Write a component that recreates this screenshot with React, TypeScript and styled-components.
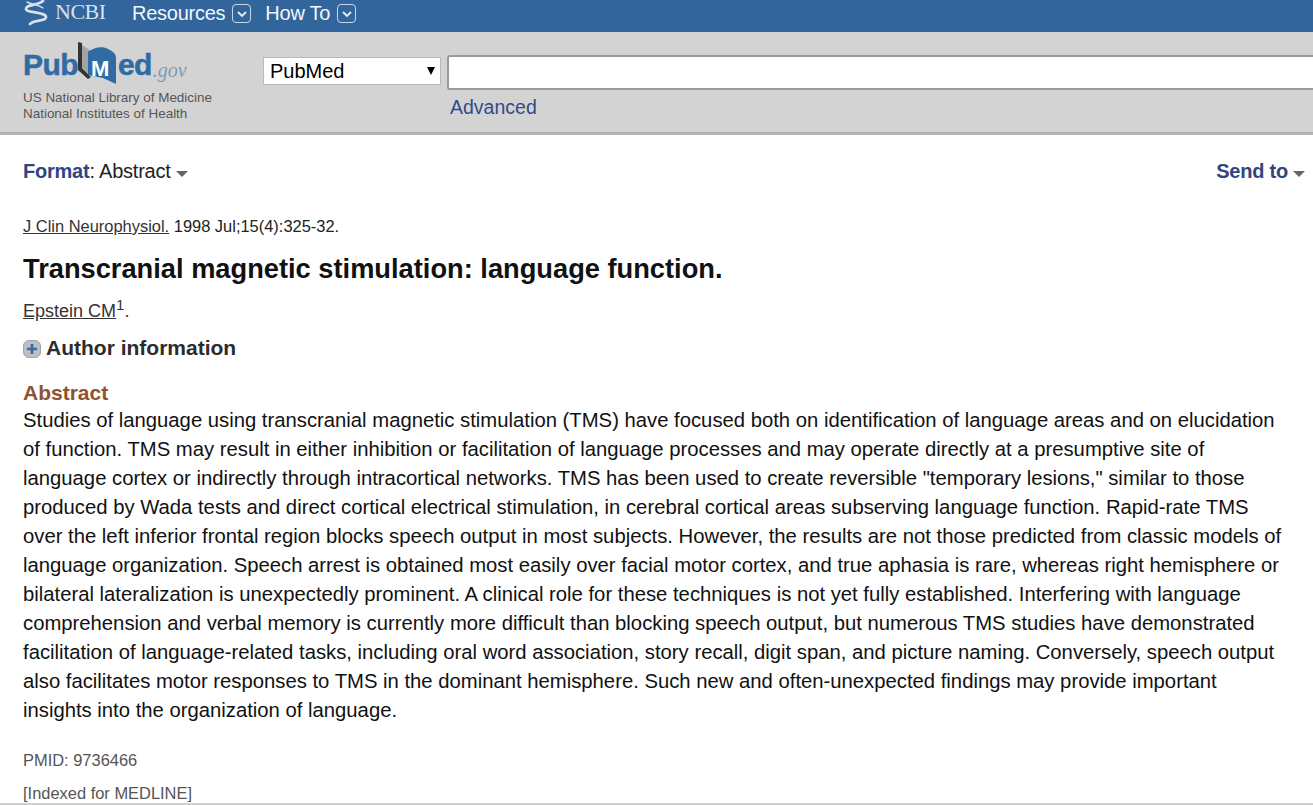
import React from "react";
import styled, { createGlobalStyle } from "styled-components";

const Global = createGlobalStyle`
  html, body { margin: 0; padding: 0; background: #fff; height: 805px; overflow: hidden; }
  body { font-family: "Liberation Sans", Arial, sans-serif; color: #000; }
`;
const Page = styled.div`
  width: 1313px; height: 805px; display: flex; flex-direction: column; overflow: hidden;
`;
const TopBar = styled.header`
  height: 32px; flex: none; background: #31659c; display: flex; align-items: center; padding-left: 23px; color: #fff;
`;
const NcbiBrand = styled.div`
  display: flex; align-items: center; width: 109px; gap: 6px; color: #d6e2ee;
  font-family: "Liberation Serif", serif; font-size: 22px; letter-spacing: -0.5px; margin-top: -8px;
`;
const NavItem = styled.div`
  display: flex; align-items: center; gap: 7px; font-size: 20px; letter-spacing: -0.25px; margin-right: 14px; margin-top: -5px; color: #f3f6fa;
`;
const Chevron = styled.span`
  width: 19px; height: 19px; display: inline-flex; align-items: center; justify-content: center;
  border: 1px solid #c9d8e8; border-radius: 4px; box-sizing: border-box;
`;
const SearchBand = styled.section`
  height: 103px; flex: none; box-sizing: border-box; background: #d3d3d3; border-bottom: 3px solid #b4b4b4;
  display: flex; padding-left: 23px;
`;
const Brand = styled.div`
  width: 240px; flex: none; display: flex; flex-direction: column;
`;
const Logo = styled.div`
  height: 43px; margin-top: 10px; display: flex; align-items: flex-end; font-weight: 700; font-size: 30px; color: #2f6ca3; line-height: 1;
  -webkit-text-stroke: 0.5px #2f6ca3;
`;
const LogoWord = styled.span`
  margin-bottom: 5px; letter-spacing: -0.6px;
`;
const LogoMark = styled.svg`
  flex: none; align-self: flex-end; -webkit-text-stroke: 0;
`;
const Gov = styled.span`
  font-family: "Liberation Serif", serif; font-style: italic; font-weight: 400; font-size: 20px; color: #7f9ab7; margin: 0 0 5px 1px;
  -webkit-text-stroke: 0;
`;
const Agency = styled.div`
  font-size: 13.45px; line-height: 16px; color: #555; margin-top: 5px;
`;
const SearchArea = styled.div`
  flex: 1; display: flex; align-items: flex-start; min-width: 0; padding-top: 23px;
`;
const DbSelect = styled.div`
  width: 178px; height: 28px; flex: none; box-sizing: border-box; background: #fff; border: 1px solid #b9b9b9;
  display: flex; align-items: center; justify-content: space-between; padding: 0 5px 0 6px; font-size: 20px; margin-top: 2px;
`;
const Arrow = styled.span`
  width: 0; height: 0; border-left: 4.5px solid transparent; border-right: 4.5px solid transparent; border-top: 8px solid #000;
`;
const SearchCol = styled.div`
  margin-left: 6px; flex: 1; min-width: 0; display: flex; flex-direction: column;
`;
const SearchInput = styled.div`
  width: 900px; height: 35px; box-sizing: border-box; background: #fff; border: 2px solid #9a9a9a; border-right: 0; border-radius: 3px 0 0 3px;
`;
const AdvancedLink = styled.a`
  font-size: 19.5px; color: #354a8c; margin: 6px 0 0 3px; line-height: 23px;
`;
const Main = styled.main`
  flex: 1; min-height: 0; padding: 0 8px 0 23px; position: relative; display: flex; flex-direction: column;
`;
const FormatRow = styled.div`
  display: flex; justify-content: space-between; margin-top: 23px; height: 26px; line-height: 26px; font-size: 20px; letter-spacing: -0.22px;
`;
const FormatGroup = styled.div`
  display: flex; align-items: center; color: #222;
`;
const FormatLabel = styled.b`
  color: #30457f;
`;
const Caret = styled.span`
  width: 0; height: 0; margin: 5px 0 0 5px; border-left: 6px solid transparent; border-right: 6px solid transparent; border-top: 6px solid #666;
`;
const Citation = styled.div`
  margin-top: 32px; font-size: 16.45px; line-height: 20px; color: #222;
`;
const PlainLink = styled.a`
  color: #333; text-decoration: underline;
`;
const Title = styled.h1`
  margin: 15px 0 0; font-size: 27.25px; line-height: 36px; font-weight: 700; color: #111;
`;
const Authors = styled.div`
  margin-top: 12px; font-size: 18px; line-height: 24px; color: #333;
`;
const Sup = styled.sup`
  font-size: 15px; line-height: 0;
`;
const InfoRow = styled.div`
  margin-top: 12px; display: flex; align-items: center; gap: 5px; font-size: 21px; font-weight: 700; color: #2c2c2c; line-height: 26px;
`;
const Plus = styled.span`
  width: 18px; height: 18px; border-radius: 6px; background: #b9c0c8; border: 1px solid #9ca4ac; box-sizing: border-box;
  display: inline-flex; align-items: center; justify-content: center; margin-top: 1px;
`;
const AbstractHead = styled.h3`
  margin: 19px 0 0; font-size: 21px; line-height: 26px; font-weight: 700; color: #8f5232;
`;
const AbstractBody = styled.div`
  font-size: 20.27px; line-height: 29px; color: #111;
`;
const Pmid = styled.div`
  font-size: 16.45px; line-height: 20px; color: #555; margin-top: 25px;
`;
const Indexed = styled(Pmid)`
  margin-top: 13px;
`;
const PageEdge = styled.div`
  position: absolute; left: 0; right: 0; bottom: 0; height: 2px; background: #cfcfcf;
`;

const ChevronIcon = () => (
  <Chevron>
    <svg width="12" height="10" viewBox="0 0 12 10" fill="none" stroke="#e8eff6" strokeWidth="1.8">
      <path d="M2 3 L6 7 L10 3" />
    </svg>
  </Chevron>
);

const lines = [
  "Studies of language using transcranial magnetic stimulation (TMS) have focused both on identification of language areas and on elucidation",
  "of function. TMS may result in either inhibition or facilitation of language processes and may operate directly at a presumptive site of",
  'language cortex or indirectly through intracortical networks. TMS has been used to create reversible "temporary lesions," similar to those',
  "produced by Wada tests and direct cortical electrical stimulation, in cerebral cortical areas subserving language function. Rapid-rate TMS",
  "over the left inferior frontal region blocks speech output in most subjects. However, the results are not those predicted from classic models of",
  "language organization. Speech arrest is obtained most easily over facial motor cortex, and true aphasia is rare, whereas right hemisphere or",
  "bilateral lateralization is unexpectedly prominent. A clinical role for these techniques is not yet fully established. Interfering with language",
  "comprehension and verbal memory is currently more difficult than blocking speech output, but numerous TMS studies have demonstrated",
  "facilitation of language-related tasks, including oral word association, story recall, digit span, and picture naming. Conversely, speech output",
  "also facilitates motor responses to TMS in the dominant hemisphere. Such new and often-unexpected findings may provide important",
  "insights into the organization of language.",
];

export default function App() {
  return (
    <Page>
      <Global />
      <TopBar>
        <NcbiBrand>
          <svg width="26" height="28" viewBox="0 0 26 28" fill="none" stroke="#d6e2ee" strokeWidth="2.8" strokeLinecap="round">
            <path d="M20 3 C 14 8, 3 6, 3 11 C 3 15, 23 14, 23 19 C 23 24, 11 21, 7 26" />
            <path d="M4 4 C 8 6, 16 7, 20 10" strokeWidth="1.4" />
          </svg>
          <span>NCBI</span>
        </NcbiBrand>
        <NavItem>Resources <ChevronIcon /></NavItem>
        <NavItem>How To <ChevronIcon /></NavItem>
      </TopBar>
      <SearchBand>
        <Brand>
          <Logo>
            <LogoWord>Pub</LogoWord>
            <LogoMark width="40" height="43" viewBox="0 0 40 43">
              <path d="M0 0 L4 1 L4 26 L13 35 L10 37 L0 28 Z" fill="#333" />
              <path d="M4 3 L13 9 L13 35 L4 26 Z" fill="#a3a3a3" />
              <path d="M10 10 C 16 5, 25 4, 30 7 C 34 9, 38 11, 38 16 L38 42 L25 36 L10 33 Z" fill="#2f6ca3" />
              <text x="13" y="34" fontFamily="Liberation Sans" fontWeight="700" fontSize="22" fill="#fff" stroke="none">M</text>
            </LogoMark>
            <LogoWord>ed</LogoWord>
            <Gov>.gov</Gov>
          </Logo>
          <Agency>US National Library of Medicine<br />National Institutes of Health</Agency>
        </Brand>
        <SearchArea>
          <DbSelect>PubMed<Arrow /></DbSelect>
          <SearchCol>
            <SearchInput />
            <AdvancedLink>Advanced</AdvancedLink>
          </SearchCol>
        </SearchArea>
      </SearchBand>
      <Main>
        <FormatRow>
          <FormatGroup><FormatLabel>Format</FormatLabel>: Abstract<Caret /></FormatGroup>
          <FormatGroup><FormatLabel>Send to</FormatLabel><Caret /></FormatGroup>
        </FormatRow>
        <Citation><PlainLink>J Clin Neurophysiol.</PlainLink> 1998 Jul;15(4):325-32.</Citation>
        <Title>Transcranial magnetic stimulation: language function.</Title>
        <Authors><PlainLink>Epstein CM</PlainLink><Sup>1</Sup>.</Authors>
        <InfoRow>
          <Plus>
            <svg width="12" height="12" viewBox="0 0 12 12" stroke="#3d6a96" strokeWidth="2.6"><path d="M6 1 V11 M1 6 H11" /></svg>
          </Plus>
          Author information
        </InfoRow>
        <AbstractHead>Abstract</AbstractHead>
        <AbstractBody>{lines.map((l) => <div key={l}>{l}</div>)}</AbstractBody>
        <Pmid>PMID: 9736466</Pmid>
        <Indexed>[Indexed for MEDLINE]</Indexed>
        <PageEdge />
      </Main>
    </Page>
  );
}
